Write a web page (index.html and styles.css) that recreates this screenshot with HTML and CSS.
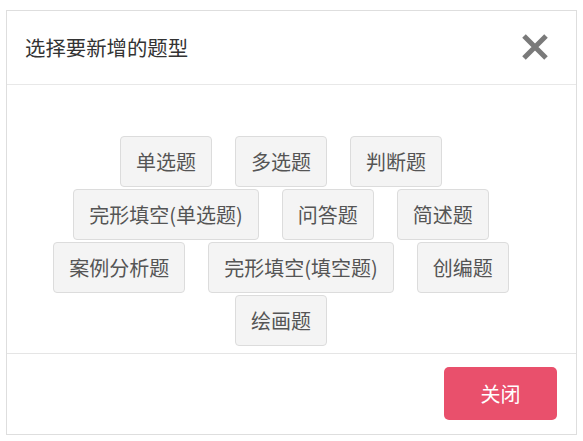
FILE: index.html
```
<!DOCTYPE html>
<html lang="zh-CN">
<head>
<meta charset="utf-8">
<link rel="stylesheet" href="styles.css">
</head>
<body>
<div class="dialog">
  <div class="dialog-header">
    <div class="dialog-title">选择要新增的题型</div>
    <button class="close-x" aria-label="关闭">
      <svg width="28" height="28" viewBox="0 0 28 28"><path d="M3 3 L25 25 M25 3 L3 25" stroke="#7a7a7a" stroke-width="5" stroke-linecap="butt"/></svg>
    </button>
  </div>
  <div class="dialog-body">
    <div class="type-list">
      <span class="type-btn">单选题</span>
      <span class="type-btn">多选题</span>
      <span class="type-btn">判断题</span>
      <span class="type-btn">完形填空(单选题)</span>
      <span class="type-btn">问答题</span>
      <span class="type-btn">简述题</span>
      <span class="type-btn">案例分析题</span>
      <span class="type-btn">完形填空(填空题)</span>
      <span class="type-btn">创编题</span>
      <span class="type-btn">绘画题</span>
    </div>
  </div>
  <div class="dialog-footer">
    <button class="btn-close">关闭</button>
  </div>
</div>
</body>
</html>
```
FILE: styles.css
```
* { box-sizing: border-box; }
html, body { margin: 0; padding: 0; background: #fff; }
body {
  font-family: "Microsoft YaHei", "Noto Sans CJK SC", "Noto Sans", sans-serif;
  color: #333;
  padding: 10px 0 0 6px;
}
.dialog {
  width: 571px;
  height: 425px;
  border: 1px solid #dedede;
  background: #fff;
  display: flex;
  flex-direction: column;
}
.dialog-header {
  height: 74px;
  border-bottom: 1px solid #e8e8e8;
  display: flex;
  align-items: center;
  justify-content: space-between;
  padding: 0 27px 2px 18px;
}
.dialog-title {
  font-size: 20.4px;
  color: #333;
  line-height: 28px;
}
.close-x {
  border: 0;
  background: transparent;
  padding: 0;
  width: 28px;
  height: 28px;
  display: flex;
}
.dialog-body {
  flex: 1;
  border-bottom: 1px solid #e5e5e5;
  padding: 51px 20px 0 20px;
}
.type-list {
  display: flex;
  flex-wrap: wrap;
  justify-content: center;
  row-gap: 2px;
}
.type-btn {
  display: block;
  font-size: 20px;
  line-height: 29px;
  padding: 10px 15px;
  border: 1px solid #dcdcdc;
  border-radius: 4px;
  background: #f4f4f4;
  color: #555;
  margin: 0 22px 0 1px;
  white-space: nowrap;
}
.dialog-footer {
  height: 80px;
  display: flex;
  justify-content: flex-end;
  align-items: center;
  padding: 0 19px 2px 0;
}
.btn-close {
  width: 113px;
  height: 53px;
  border: 0;
  border-radius: 5px;
  background: #e9506c;
  color: #fff;
  font-family: inherit;
  font-size: 20px;
}
```
